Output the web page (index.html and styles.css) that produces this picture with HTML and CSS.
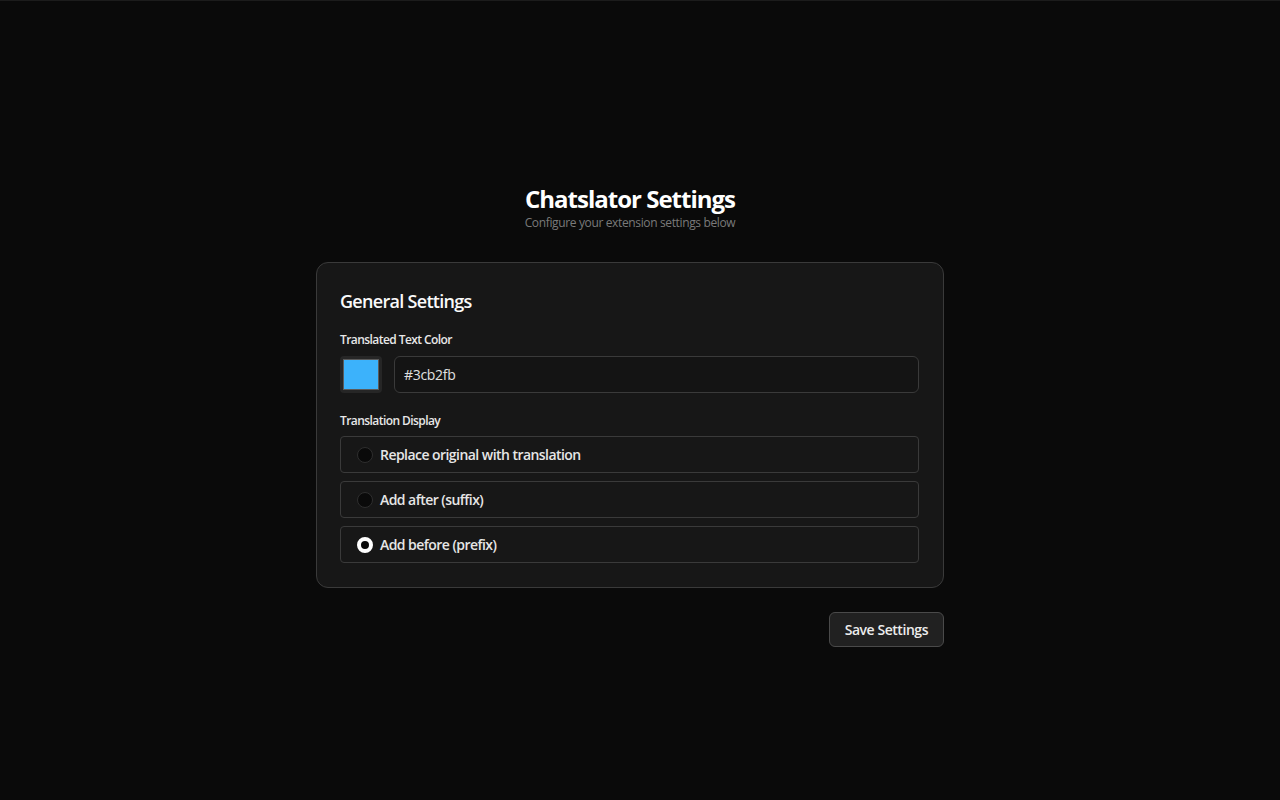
FILE: index.html
```html
<!DOCTYPE html>
<html lang="en">
<head>
<meta charset="utf-8">
<title>Chatslator Settings</title>
<link rel="stylesheet" href="styles.css">
</head>
<body>
<main class="page">
  <header class="header">
    <h1 class="title">Chatslator Settings</h1>
    <p class="subtitle">Configure your extension settings below</p>
  </header>
  <section class="card">
    <h2 class="card-title">General Settings</h2>
    <div class="field">
      <label class="label">Translated Text Color</label>
      <div class="color-row">
        <div class="swatch-box"><div class="swatch"></div></div>
        <div class="text-input">#3cb2fb</div>
      </div>
    </div>
    <div class="field">
      <label class="label">Translation Display</label>
      <div class="options">
        <div class="option"><span class="radio"></span><span class="option-text">Replace original with translation</span></div>
        <div class="option"><span class="radio"></span><span class="option-text">Add after (suffix)</span></div>
        <div class="option"><span class="radio checked"></span><span class="option-text">Add before (prefix)</span></div>
      </div>
    </div>
  </section>
  <div class="actions">
    <button class="save">Save Settings</button>
  </div>
</main>
</body>
</html>
```

FILE: styles.css
```css
* { box-sizing: border-box; }
html, body { margin: 0; padding: 0; }
body {
  background: #0a0a0a;
  color: #f5f5f5;
  font-family: "Open Sans", "Noto Sans", sans-serif;
  height: 800px;
  border-top: 1px solid #1c1c1c;
  padding-right: 20px;
}
.page {
  width: 628px;
  margin: 0 auto;
  padding-top: 182px;
}
.header { text-align: center; }
.title {
  margin: 0;
  font-size: 24px;
  line-height: 32px;
  font-weight: 700;
  color: #ffffff;
  letter-spacing: -1px;
}
.subtitle {
  margin: 0;
  font-size: 12px;
  line-height: 16px;
  color: #7a7a7a;
  letter-spacing: -0.36px;
}
.card {
  margin-top: 31px;
  background: #171717;
  border: 1px solid #3a3a3a;
  border-radius: 12px;
  padding: 24px 24px 24px 23px;
}
.card-title {
  margin: 0 0 17px;
  font-size: 18px;
  line-height: 28px;
  font-weight: 600;
  color: #fafafa;
  letter-spacing: -0.7px;
}
.field { margin-bottom: 20px; }
.field:last-child { margin-bottom: 0; }
.label {
  display: block;
  font-size: 12px;
  line-height: 16px;
  font-weight: 600;
  color: #e8e8e8;
  margin-bottom: 8px;
  letter-spacing: -0.57px;
}
.field + .field .label { margin-bottom: 7px; }
.color-row {
  display: flex;
  gap: 12px;
  height: 37px;
}
.swatch-box {
  width: 42px;
  height: 37px;
  background: #262626;
  border-radius: 4px;
  padding: 3px;
}
.swatch {
  width: 100%;
  height: 100%;
  background: #3cb2fb;
  border: 1px solid #5a5a5a;
}
.text-input {
  flex: 1;
  border: 1px solid #3a3a3a;
  background: #141414;
  border-radius: 6px;
  padding: 0 9px;
  display: flex;
  align-items: center;
  font-size: 14px;
  color: #e0e0e0;
  letter-spacing: -0.3px;
}
.options {
  display: flex;
  flex-direction: column;
  gap: 8px;
}
.option {
  height: 37px;
  border: 1px solid #3a3a3a;
  border-radius: 4px;
  display: flex;
  align-items: center;
  padding-left: 16px;
  gap: 7px;
}
.radio {
  width: 16px;
  height: 16px;
  border-radius: 50%;
  background: #0a0a0a;
  border: 1px solid #2e2e2e;
  flex: none;
}
.radio.checked {
  background: #0a0a0a;
  border: 4px solid #ffffff;
}
.option-text {
  font-size: 14px;
  font-weight: 600;
  color: #e6e6e6;
  letter-spacing: -0.55px;
}
.actions {
  display: flex;
  justify-content: flex-end;
  margin-top: 24px;
}
.save {
  height: 35px;
  padding: 0 15px;
  background: #212121;
  border: 1px solid #4a4a4a;
  border-radius: 6px;
  color: #ececec;
  font-family: inherit;
  font-size: 14px;
  font-weight: 600;
  letter-spacing: -0.45px;
}
```
